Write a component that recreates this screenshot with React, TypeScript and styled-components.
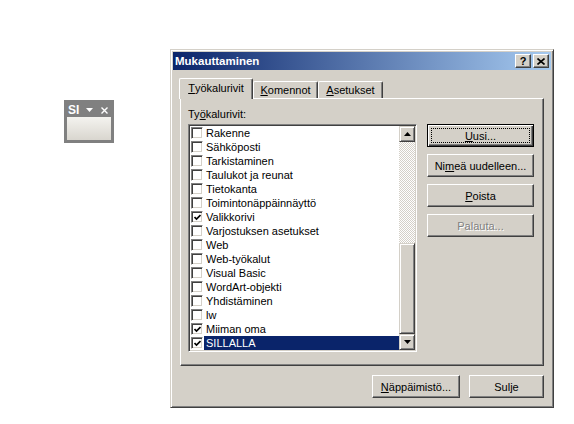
import React from "react";
import styled, { createGlobalStyle, css } from "styled-components";

const GlobalStyle = createGlobalStyle`
  body {
    margin: 0;
    background: #fff;
    font-family: "Liberation Sans", Arial, sans-serif;
    font-size: 11px;
  }
`;

const toolbars = [
  { name: "Rakenne", checked: false },
  { name: "Sähköposti", checked: false },
  { name: "Tarkistaminen", checked: false },
  { name: "Taulukot ja reunat", checked: false },
  { name: "Tietokanta", checked: false },
  { name: "Toimintonäppäinnäyttö", checked: false },
  { name: "Valikkorivi", checked: true },
  { name: "Varjostuksen asetukset", checked: false },
  { name: "Web", checked: false },
  { name: "Web-työkalut", checked: false },
  { name: "Visual Basic", checked: false },
  { name: "WordArt-objekti", checked: false },
  { name: "Yhdistäminen", checked: false },
  { name: "lw", checked: false },
  { name: "Miiman oma", checked: true },
  { name: "SILLALLA", checked: true, selected: true },
];

const raised = css`
  background: #d4d0c8;
  border: 1px solid;
  border-color: #fff #404040 #404040 #fff;
  box-shadow: inset -1px -1px #808080;
`;

export default function App() {
  return (
    <>
      <GlobalStyle />
      <Desktop>
        <FloatingToolbar>
          <ToolbarTitle>
            <ToolbarName>SI</ToolbarName>
            <svg width="7" height="4" viewBox="0 0 7 4">
              <path d="M0 0h7L3.5 4z" fill="#fff" />
            </svg>
            <ToolbarClose>
              <svg width="7" height="7" viewBox="0 0 7 7">
                <path d="M0.5 0.5L6.5 6.5M6.5 0.5L0.5 6.5" stroke="#fff" strokeWidth="1.4" />
              </svg>
            </ToolbarClose>
          </ToolbarTitle>
          <ToolbarBody />
        </FloatingToolbar>

        <Dialog>
          <TitleBar>
            <TitleText>Mukauttaminen</TitleText>
            <CaptionButton>?</CaptionButton>
            <CaptionButton>
              <svg width="8" height="7" viewBox="0 0 8 7">
                <path d="M0.5 0.5L7.5 6.5M7.5 0.5L0.5 6.5" stroke="#000" strokeWidth="1.6" />
              </svg>
            </CaptionButton>
          </TitleBar>

          <DialogBody>
            <TabRow>
              <Tab $active $width={74}>
                <u>T</u>yökalurivit
              </Tab>
              <Tab $width={65}>
                <u>K</u>omennot
              </Tab>
              <Tab $width={65}>
                <u>A</u>setukset
              </Tab>
            </TabRow>

            <Panel>
              <LeftColumn>
                <FieldLabel>
                  Ty<u>ö</u>kalurivit:
                </FieldLabel>
                <ListBox>
                  <Rows>
                    {toolbars.map((t) => (
                      <Row key={t.name}>
                        <CheckBox>
                          {t.checked && (
                            <svg width="7" height="7" viewBox="0 0 7 7">
                              <path d="M0.5 3L2.5 5L6.5 1" stroke="#000" strokeWidth="1.7" fill="none" />
                            </svg>
                          )}
                        </CheckBox>
                        <RowLabel $selected={!!t.selected}>{t.name}</RowLabel>
                      </Row>
                    ))}
                  </Rows>
                  <ScrollBar>
                    <ScrollButton>
                      <svg width="7" height="4" viewBox="0 0 7 4">
                        <path d="M3.5 0L7 4H0z" fill="#000" />
                      </svg>
                    </ScrollButton>
                    <Track>
                      <Thumb />
                    </Track>
                    <ScrollButton>
                      <svg width="7" height="4" viewBox="0 0 7 4">
                        <path d="M0 0h7L3.5 4z" fill="#000" />
                      </svg>
                    </ScrollButton>
                  </ScrollBar>
                </ListBox>
              </LeftColumn>

              <ButtonColumn>
                <Button $default $width={107}>
                  <u>U</u>usi...
                </Button>
                <Button $width={107}>
                  Ni<u>m</u>eä uudelleen...
                </Button>
                <Button $width={107}>
                  <u>P</u>oista
                </Button>
                <Button $width={107} $disabled>
                  Palauta...
                </Button>
              </ButtonColumn>
            </Panel>

            <Footer>
              <Button $width={88}>
                <u>N</u>äppäimistö...
              </Button>
              <Button $width={75}>Sulje</Button>
            </Footer>
          </DialogBody>
        </Dialog>
      </Desktop>
    </>
  );
}

const Desktop = styled.div`
  position: relative;
  width: 574px;
  height: 424px;
  background: #fff;
  overflow: hidden;
`;

const FloatingToolbar = styled.div`
  position: absolute;
  left: 64px;
  top: 100px;
  width: 50px;
  height: 43px;
  box-sizing: border-box;
  border: 3px solid #808080;
  display: flex;
  flex-direction: column;
`;

const ToolbarTitle = styled.div`
  height: 14px;
  background: #808080;
  display: flex;
  align-items: center;
  gap: 7px;
  padding-left: 1px;
  color: #fff;
`;

const ToolbarName = styled.span`
  font-weight: bold;
  font-size: 12px;
  line-height: 14px;
`;

const ToolbarClose = styled.span`
  display: flex;
  margin-left: auto;
  margin-right: 3px;
`;

const ToolbarBody = styled.div`
  flex: 1;
  background: linear-gradient(#f4f3ef, #d9d6cf);
`;

const Dialog = styled.div`
  position: absolute;
  left: 170px;
  top: 49px;
  width: 384px;
  height: 359px;
  box-sizing: border-box;
  padding: 2px;
  background: #d4d0c8;
  border: 1px solid;
  border-color: #d4d0c8 #404040 #404040 #d4d0c8;
  box-shadow: inset 1px 1px #fff, inset -1px -1px #808080;
  display: flex;
  flex-direction: column;
`;

const TitleBar = styled.div`
  height: 18px;
  display: flex;
  align-items: center;
  gap: 2px;
  padding: 0 2px;
  background: linear-gradient(to right, #0a246a, #a6caf0);
`;

const TitleText = styled.span`
  flex: 1;
  color: #fff;
  font-weight: bold;
  font-size: 11.5px;
`;

const CaptionButton = styled.div`
  ${raised};
  width: 16px;
  height: 14px;
  box-sizing: border-box;
  display: flex;
  align-items: center;
  justify-content: center;
  font-weight: bold;
  font-size: 11px;
  line-height: 12px;
  color: #000;
`;

const DialogBody = styled.div`
  flex: 1;
  display: flex;
  flex-direction: column;
  padding: 8px 7px 7px 7px;
`;

const TabRow = styled.div`
  height: 20px;
  display: flex;
  align-items: flex-end;
`;

const Tab = styled.div<{ $active?: boolean; $width: number }>`
  width: ${({ $width }) => $width}px;
  height: ${({ $active }) => ($active ? 21 : 17)}px;
  box-sizing: border-box;
  background: #d4d0c8;
  border-top: 1px solid #fff;
  border-left: 1px solid #fff;
  border-right: 1px solid #404040;
  border-radius: 2px 2px 0 0;
  box-shadow: inset -1px 0 #808080;
  display: flex;
  justify-content: center;
  padding-top: ${({ $active }) => ($active ? 3 : 2)}px;
  line-height: 13px;
  color: #000;
  ${({ $active }) =>
    $active &&
    css`
      position: relative;
      z-index: 1;
      margin-left: -1px;
      margin-bottom: -1px;
    `}
`;

const Panel = styled.div`
  height: 268px;
  box-sizing: border-box;
  border: 1px solid;
  border-color: #fff #404040 #404040 #fff;
  box-shadow: inset -1px -1px #808080;
  display: flex;
  padding: 9px 0 0 7px;
`;

const LeftColumn = styled.div`
  width: 229px;
  display: flex;
  flex-direction: column;
`;

const FieldLabel = styled.div`
  height: 13px;
  line-height: 13px;
  margin-bottom: 3px;
  color: #000;
`;

const ListBox = styled.div`
  height: 228px;
  box-sizing: border-box;
  border: 1px solid;
  border-color: #808080 #fff #fff #808080;
  box-shadow: inset 1px 1px #404040, inset -1px -1px #d4d0c8;
  padding: 1px;
  display: flex;
  background: #fff;
`;

const Rows = styled.div`
  flex: 1;
  display: flex;
  flex-direction: column;
`;

const Row = styled.div`
  height: 14px;
  display: flex;
  align-items: center;
`;

const CheckBox = styled.div`
  width: 12px;
  height: 12px;
  margin-left: 1px;
  box-sizing: border-box;
  background: #fff;
  border: 1px solid;
  border-color: #808080 #fff #fff #808080;
  box-shadow: inset 1px 1px #404040, inset -1px -1px #d4d0c8;
  display: flex;
  align-items: center;
  justify-content: center;
  padding: 1px 0 0 1px;
`;

const RowLabel = styled.div<{ $selected: boolean }>`
  flex: 1;
  height: 14px;
  line-height: 14px;
  padding-left: 2px;
  margin-left: 1px;
  white-space: nowrap;
  color: ${({ $selected }) => ($selected ? "#fff" : "#000")};
  background: ${({ $selected }) => ($selected ? "#0a246a" : "transparent")};
`;

const ScrollBar = styled.div`
  width: 16px;
  display: flex;
  flex-direction: column;
`;

const ScrollButton = styled.div`
  width: 16px;
  height: 16px;
  box-sizing: border-box;
  background: #d4d0c8;
  border: 1px solid;
  border-color: #d4d0c8 #404040 #404040 #d4d0c8;
  box-shadow: inset 1px 1px #fff, inset -1px -1px #808080;
  display: flex;
  align-items: center;
  justify-content: center;
`;

const Track = styled.div`
  flex: 1;
  display: flex;
  flex-direction: column;
  justify-content: flex-end;
  background: repeating-conic-gradient(#d4d0c8 0 25%, #fff 0 50%) 0 0 / 2px 2px;
`;

const Thumb = styled.div`
  height: 91px;
  box-sizing: border-box;
  background: #d4d0c8;
  border: 1px solid;
  border-color: #d4d0c8 #404040 #404040 #d4d0c8;
  box-shadow: inset 1px 1px #fff, inset -1px -1px #808080;
`;

const ButtonColumn = styled.div`
  display: flex;
  flex-direction: column;
  gap: 7px;
  margin-left: 10px;
  padding-top: 16px;
`;

const Button = styled.div<{ $default?: boolean; $disabled?: boolean; $width: number }>`
  ${raised};
  position: relative;
  width: ${({ $width }) => $width}px;
  height: 23px;
  box-sizing: border-box;
  display: flex;
  align-items: center;
  justify-content: center;
  color: ${({ $disabled }) => ($disabled ? "#808080" : "#000")};
  text-shadow: ${({ $disabled }) => ($disabled ? "1px 1px #fff" : "none")};
  white-space: nowrap;
  ${({ $default }) =>
    $default &&
    css`
      border-color: #000;
      box-shadow: inset 1px 1px #fff, inset -1px -1px #404040, inset -2px -2px #808080;
      &::after {
        content: "";
        position: absolute;
        inset: 3px;
        border: 1px dotted #000;
      }
    `}
`;

const Footer = styled.div`
  display: flex;
  justify-content: flex-end;
  gap: 9px;
  margin-top: 9px;
`;
